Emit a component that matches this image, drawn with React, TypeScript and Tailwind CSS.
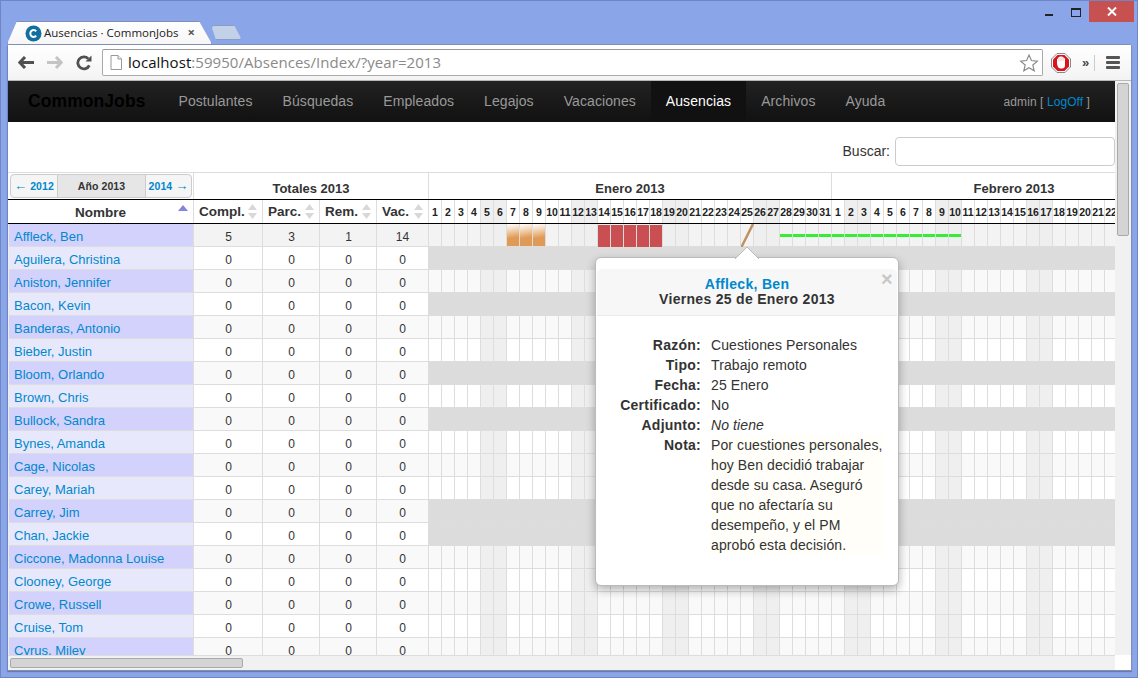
import React from "react";

const names = ["Affleck, Ben","Aguilera, Christina","Aniston, Jennifer","Bacon, Kevin","Banderas, Antonio","Bieber, Justin","Bloom, Orlando","Brown, Chris","Bullock, Sandra","Bynes, Amanda","Cage, Nicolas","Carey, Mariah","Carrey, Jim","Chan, Jackie","Ciccone, Madonna Louise","Clooney, George","Crowe, Russell","Cruise, Tom","Cyrus, Miley"];
const grayRows = [1,3,6,8,12,13];
const days = Array.from({length:59},(_,i)=>({n:i<31?i+1:i-30, i, we:((i+1)%7===5||(i+1)%7===6)}));
const navItems = ["Postulantes","Búsquedas","Empleados","Legajos","Vacaciones","Ausencias","Archivos","Ayuda"];

function Sort({active}:{active?:boolean}){
  return active
    ? <svg width="10" height="6" viewBox="0 0 10 6" className="absolute right-[5px] top-[5px]"><path d="M5 0L10 6H0Z" fill="#8484dc"/></svg>
    : <svg width="9" height="16" viewBox="0 0 9 16" className="absolute right-[5px] top-[4px]"><path d="M4.5 0L9 6H0Z" fill="#d8d8d8"/><path d="M4.5 15L9 9H0Z" fill="#d8d8d8"/></svg>;
}

function HeadCell({label,w}:{label:string;w:string}){
  return <div className={`${w} relative shrink-0 border-r border-[#ddd] pl-[5px] pt-[2px] flex items-center text-[13.5px] font-bold text-[#333] bg-white`}>{label}<Sort/></div>;
}

function Row({name,idx}:{name:string;idx:number}){
  const gray = grayRows.includes(idx);
  const first = idx===0;
  const odd = idx%2===0;
  const totals = first?[5,3,1,14]:[0,0,0,0];
  const totalBg = first?"bg-[#f3f3f3]":odd?"bg-[#f9f9f9]":"bg-white";
  return (
    <div className="flex h-[23px] w-max">
      <div className="w-[1px] shrink-0 bg-[#eee]"/>
      <div className={`w-[185px] shrink-0 border-r border-b border-[#ddd] pl-[5px] text-[13px] leading-[25px] text-[#0088cc] whitespace-nowrap overflow-hidden ${odd?"bg-[#d2d2fd]":"bg-[#e8e8fd]"}`}>{name}</div>
      {totals.map((t,i)=>(
        <div key={i} className={`${i===0?"w-[69px] pl-[1px]":i===3?"w-[52px]":"w-[57px] pl-[1px]"} shrink-0 border-r border-b border-[#ddd] text-center text-[12px] leading-[26px] text-[#333] ${totalBg}`}>{t}</div>
      ))}
      {days.map(d=>{
        const bg = gray?"bg-[#dcdcdc]":d.we?"bg-[#efefef]":first?"bg-[#f3f3f3]":odd?"bg-[#f9f9f9]":"bg-white";
        return (
          <div key={d.i} className={`w-[13px] shrink-0 border-r border-b border-[#dddddd] ${bg} relative flex items-center`}>
            {first&&d.i>=6&&d.i<=8&&<div className="w-full h-[22px] bg-[linear-gradient(170deg,#ffffff_0%,#f6e2cc_20%,#e09a55_62%,#e09a55_100%)]"/>}
            {first&&d.i>=13&&d.i<=17&&<div className="w-full h-[22px] mt-[1px] bg-[#c94f52]"/>}
            {first&&d.i>=27&&d.i<=40&&<div className="w-full h-[3px] bg-[#33ee33]"/>}
            {first&&d.i===24&&<svg width="13" height="23" viewBox="0 0 13 23" className="absolute left-0 top-0"><path d="M0.5 23L12 0" stroke="#c09060" strokeWidth="2.4"/></svg>}
          </div>
        );
      })}
    </div>
  );
}

function Popover(){
  const rows:[string,React.ReactNode][]=[["Razón:","Cuestiones Personales"],["Tipo:","Trabajo remoto"],["Fecha:","25 Enero"],["Certificado:","No"],["Adjunto:",<em>No tiene</em>]];
  return (
    <div className="absolute left-[587px] top-[176px] w-[304px] h-[329px] bg-white border border-[#bbb] rounded-[6px] shadow-[0_4px_10px_rgba(0,0,0,0.3)] pt-[11px] text-[14px] text-[#333] tracking-[0.1px]">
      <svg width="24" height="12" viewBox="0 0 24 12" className="absolute left-[139px] top-[-11px]"><path d="M0 12L12 0L24 12" fill="#fff" stroke="#bbb"/></svg>
      <div className="relative mx-[1px] h-[47px] bg-[#f7f7f7] border-b border-[#ebebeb] rounded-t-[5px] text-center font-bold leading-[15px] pt-[8px] tracking-[0.3px] text-[14px]">
        <div className="text-[#0088cc]">Affleck, Ben</div>
        <div>Viernes 25 de Enero 2013</div>
        <span className="absolute right-[4px] top-[0px] text-[20px] leading-[20px] text-[#c8c8c8] font-bold">×</span>
      </div>
      <div className="mt-[19px] flex flex-col">
        {rows.map(([k,v],i)=>(
          <div key={i} className="flex leading-[20px]">
            <div className="w-[105px] text-right font-bold shrink-0 tracking-[0.25px]">{k}</div>
            <div className="ml-[10px]">{v}</div>
          </div>
        ))}
        <div className="flex leading-[20px]">
          <div className="w-[105px] text-right font-bold shrink-0 tracking-[0.25px]">Nota:</div>
          <div className="ml-[10px] w-[172px] bg-[#fffef8]">Por cuestiones personales, hoy Ben decidió trabajar desde su casa. Aseguró que no afectaría su desempeño, y el PM aprobó esta decisión.</div>
        </div>
      </div>
    </div>
  );
}

export default function App(){
  return (
    <div className="w-[1138px] h-[678px] overflow-hidden flex flex-col bg-[#8aa6e9] font-['Liberation_Sans',Arial,sans-serif] border border-[#6f86c4]">
      {/* tab strip */}
      <div className="h-[43px] shrink-0 flex items-start pl-[6px] pr-[3px]">
        <div className="mt-[20px] h-[23px] w-[205px] shrink-0 flex items-center pl-[17px] bg-[linear-gradient(#ffffff,#f6f6f6)] rounded-t-[4px] border-t border-x border-[#7f8fb8] [clip-path:polygon(10px_0,192px_0,205px_100%,0_100%)] font-['Open_Sans',sans-serif] text-[11.5px] text-[#222]">
          <svg width="17" height="17" viewBox="0 0 17 17" className="shrink-0"><circle cx="8.5" cy="8.5" r="8" fill="#0f6f9f"/><path d="M11.2 6.2A3.4 3.4 0 1 0 11.2 10.8" fill="none" stroke="#fff" strokeWidth="2"/></svg>
          <span className="ml-[2px] whitespace-nowrap">Ausencias · CommonJobs</span>
          <span className="ml-[9px] text-[13px] font-bold text-[#555]">×</span>
        </div>
        <div className="mt-[24px] ml-[-1px] h-[15px] w-[31px] bg-[#c2d0e8] border border-[#8b9cc6] rounded-[3px] [clip-path:polygon(0_0,23px_0,100%_100%,5px_100%)]"/>
        <div className="ml-auto flex items-start">
          <div className="w-[26px] h-[20px] flex items-start justify-center pt-[13px]"><div className="w-[8px] h-[2px] bg-[#222]"/></div>
          <div className="w-[27px] h-[20px] flex items-start justify-center pt-[7px]"><div className="w-[10px] h-[9px] border border-t-2 border-[#222]"/></div>
          <div className="w-[45px] h-[21px] bg-[#c75050] text-white flex items-center justify-center">
            <svg width="10" height="9" viewBox="0 0 10 9"><path d="M1 0.5L9 8.5M9 0.5L1 8.5" stroke="#fff" strokeWidth="2"/></svg>
          </div>
        </div>
      </div>
      {/* window */}
      <div className="flex-1 ml-[6px] mr-[5px] mb-[6px] bg-[#f1f1f1] rounded-t-[3px] border border-t border-[#7f8fb8] border-l-[#6f86c4] flex flex-col min-h-0 shadow-[0_1px_1px_rgba(60,70,110,0.5)]">
        {/* toolbar */}
        <div className="h-[36px] shrink-0 flex items-center bg-[linear-gradient(#ffffff,#f3f3f3)] border-b border-[#b8b8b8]">
          <div className="w-[94px] shrink-0 flex items-center pl-[10px]">
            <svg width="16" height="13" viewBox="0 0 16 13"><path d="M7 1L1.8 6.5L7 12M2.5 6.5H16" fill="none" stroke="#505050" strokeWidth="3"/></svg>
            <svg width="16" height="13" viewBox="0 0 16 13" className="ml-[13px]"><path d="M9 1L14.2 6.5L9 12M13.5 6.5H0" fill="none" stroke="#c4c4c4" strokeWidth="3"/></svg>
            <svg width="16" height="16" viewBox="0 0 16 16" className="ml-[13px]"><path d="M13.3 10.3A6 6 0 1 1 12.2 3.7" fill="none" stroke="#505050" strokeWidth="2.8"/><path d="M9.5 6.5H15.5V0.5Z" fill="#505050"/></svg>
          </div>
          <div className="w-[941px] h-[27px] shrink-0 bg-white border border-[#aaa] border-t-[#999] rounded-[2px] flex items-center pl-[7px] font-['Open_Sans',sans-serif] text-[15px] tracking-[0.05px] text-[#8a8a8a]">
            <svg width="12" height="15" viewBox="0 0 12 15" className="shrink-0"><path d="M1 0.5H8L11.5 4V14.5H1Z" fill="#fff" stroke="#999"/><path d="M8 0.5V4H11.5" fill="#eee" stroke="#999"/></svg>
            <span className="ml-[6px] whitespace-nowrap"><span className="text-[#111]">localhost</span>:59950/Absences/Index/?year=2013</span>
            <svg width="20" height="20" viewBox="0 0 24 24" className="ml-auto mr-[3px]"><path d="M12 2.5L14.9 9L22 9.7L16.6 14.4L18.2 21.4L12 17.7L5.8 21.4L7.4 14.4L2 9.7L9.1 9Z" fill="#fff" stroke="#8a8a8a" strokeWidth="1.4"/></svg>
          </div>
          <svg width="20" height="20" viewBox="0 0 20 20" className="ml-[8px] shrink-0 mt-[1px]">
            <path d="M6 0.5H14L19.5 6V14L14 19.5H6L0.5 14V6Z" fill="#fff" stroke="#888"/>
            <path d="M6.5 2H13.5L18 6.5V13.5L13.5 18H6.5L2 13.5V6.5Z" fill="#d9141c"/>
            <path d="M6 8.5V6.5Q6 5.5 7 5.5V5Q7 4.2 8 4.2Q8.2 3.5 9.2 3.5H10.8Q11.8 3.5 12 4.2Q13 4.2 13 5Q14 5 14 6V12Q14 15.5 11 15.5H9.5Q7.5 15.5 6.8 13.5L6 11Z" fill="#fff"/>
            <path d="M8 5V8M10 4V8M12 5V8" stroke="#e8a0a0" strokeWidth="0.6"/>
          </svg>
          <span className="ml-[11px] text-[13px] font-bold text-[#444] leading-none">»</span>
          <div className="ml-[5px] w-[1px] h-[16px] bg-[#ccc]"/>
          <div className="ml-[11px] flex flex-col gap-[2px]">
            <div className="w-[14px] h-[3px] bg-[#555] rounded-[1px]"/>
            <div className="w-[14px] h-[3px] bg-[#555] rounded-[1px]"/>
            <div className="w-[14px] h-[3px] bg-[#555] rounded-[1px]"/>
          </div>
        </div>
        {/* viewport */}
        <div className="flex-1 flex min-h-0 bg-white">
          <div className="w-[1107px] shrink-0 flex flex-col min-h-0">
            <div className="flex-1 min-h-0 overflow-hidden relative bg-white">
              {/* nav */}
              <div className="h-[41px] flex items-center bg-[linear-gradient(#222222,#111111)] text-[14px] tracking-[0.08px] text-[#999]">
                <div className="pl-[20px] pr-[18px] text-[17.5px] font-bold text-black leading-[41px]">CommonJobs</div>
                {navItems.map(n=>(
                  <div key={n} className={`px-[15px] h-[41px] leading-[41px] ${n==="Ausencias"?"bg-[#111] text-white":""}`}>{n}</div>
                ))}
                <div className="ml-auto pr-[25px] text-[12px]">admin [ <span className="text-[#0088cc]">LogOff</span> ]</div>
              </div>
              {/* search */}
              <div className="h-[50px] flex items-start justify-end pt-[15px] text-[14px] text-[#333]">
                <span className="mr-[5px] leading-[29px]">Buscar:</span>
                <div className="w-[220px] h-[29px] bg-white border border-[#ccc] rounded-[4px]"/>
              </div>
              {/* table */}
              <div className="w-max border-t border-[#ddd]">
                <div className="flex h-[27px] border-b border-black">
                  <div className="w-[186px] shrink-0 border-r border-[#ddd] pl-[2px] pt-[1px]">
                    <div className="w-[182px] h-[24px] flex border border-[#ccc] rounded-[4px] bg-[#f5f5f5] text-[10.5px] font-bold tracking-[0.1px] leading-[22px] text-center overflow-hidden">
                      <div className="w-[46px] text-[#0088cc] whitespace-nowrap"><span className="text-[13px] font-normal">←</span> 2012</div>
                      <div className="w-[89px] bg-[#e6e6e6] border-x border-[#ccc] text-[#333]">Año 2013</div>
                      <div className="flex-1 text-[#0088cc] whitespace-nowrap">2014 <span className="text-[13px] font-normal">→</span></div>
                    </div>
                  </div>
                  <div className="w-[235px] shrink-0 border-r border-[#ddd] text-center text-[13px] font-bold text-[#333] leading-[32px]">Totales 2013</div>
                  <div className="w-[403px] shrink-0 border-r border-[#ddd] text-center text-[13px] font-bold text-[#333] leading-[32px]">Enero 2013</div>
                  <div className="w-[364px] shrink-0 text-center text-[13px] font-bold text-[#333] leading-[32px]">Febrero 2013</div>
                </div>
                <div className="flex h-[24px] border-b border-black">
                  <div className="w-[186px] relative shrink-0 border-r border-[#ddd] text-center text-[13.5px] font-bold text-[#333] leading-[25px]">Nombre<Sort active/></div>
                  <HeadCell label="Compl." w="w-[69px]"/>
                  <HeadCell label="Parc." w="w-[57px]"/>
                  <HeadCell label="Rem." w="w-[57px]"/>
                  <HeadCell label="Vac." w="w-[52px]"/>
                  {days.map(d=>(
                    <div key={d.i} className={`w-[13px] shrink-0 border-r border-[#ddd] text-center text-[10.5px] font-bold text-[#222] leading-[24px] whitespace-nowrap ${d.we?"bg-[#efefef]":"bg-white"}`}>{d.n}</div>
                  ))}
                </div>
                {names.map((n,i)=><Row key={n} name={n} idx={i}/>)}
              </div>
              <Popover/>
            </div>
            {/* horizontal scrollbar */}
            <div className="h-[15px] shrink-0 bg-[#f1f1f1] border-t border-[#ddd] pl-[2px] pt-[2px]">
              <div className="w-[233px] h-[10px] bg-[#d4d4d4] border border-[#aaa] rounded-[2px]"/>
            </div>
          </div>
          {/* vertical scrollbar */}
          <div className="flex-1 flex flex-col">
            <div className="flex-1 bg-[#f1f1f1] px-[2px] pt-[2px]">
              <div className="w-[12px] h-[153px] bg-[#d4d4d4] border border-[#aaa] rounded-[2px]"/>
            </div>
            <div className="h-[15px] bg-white"/>
          </div>
        </div>
      </div>
    </div>
  );
}
